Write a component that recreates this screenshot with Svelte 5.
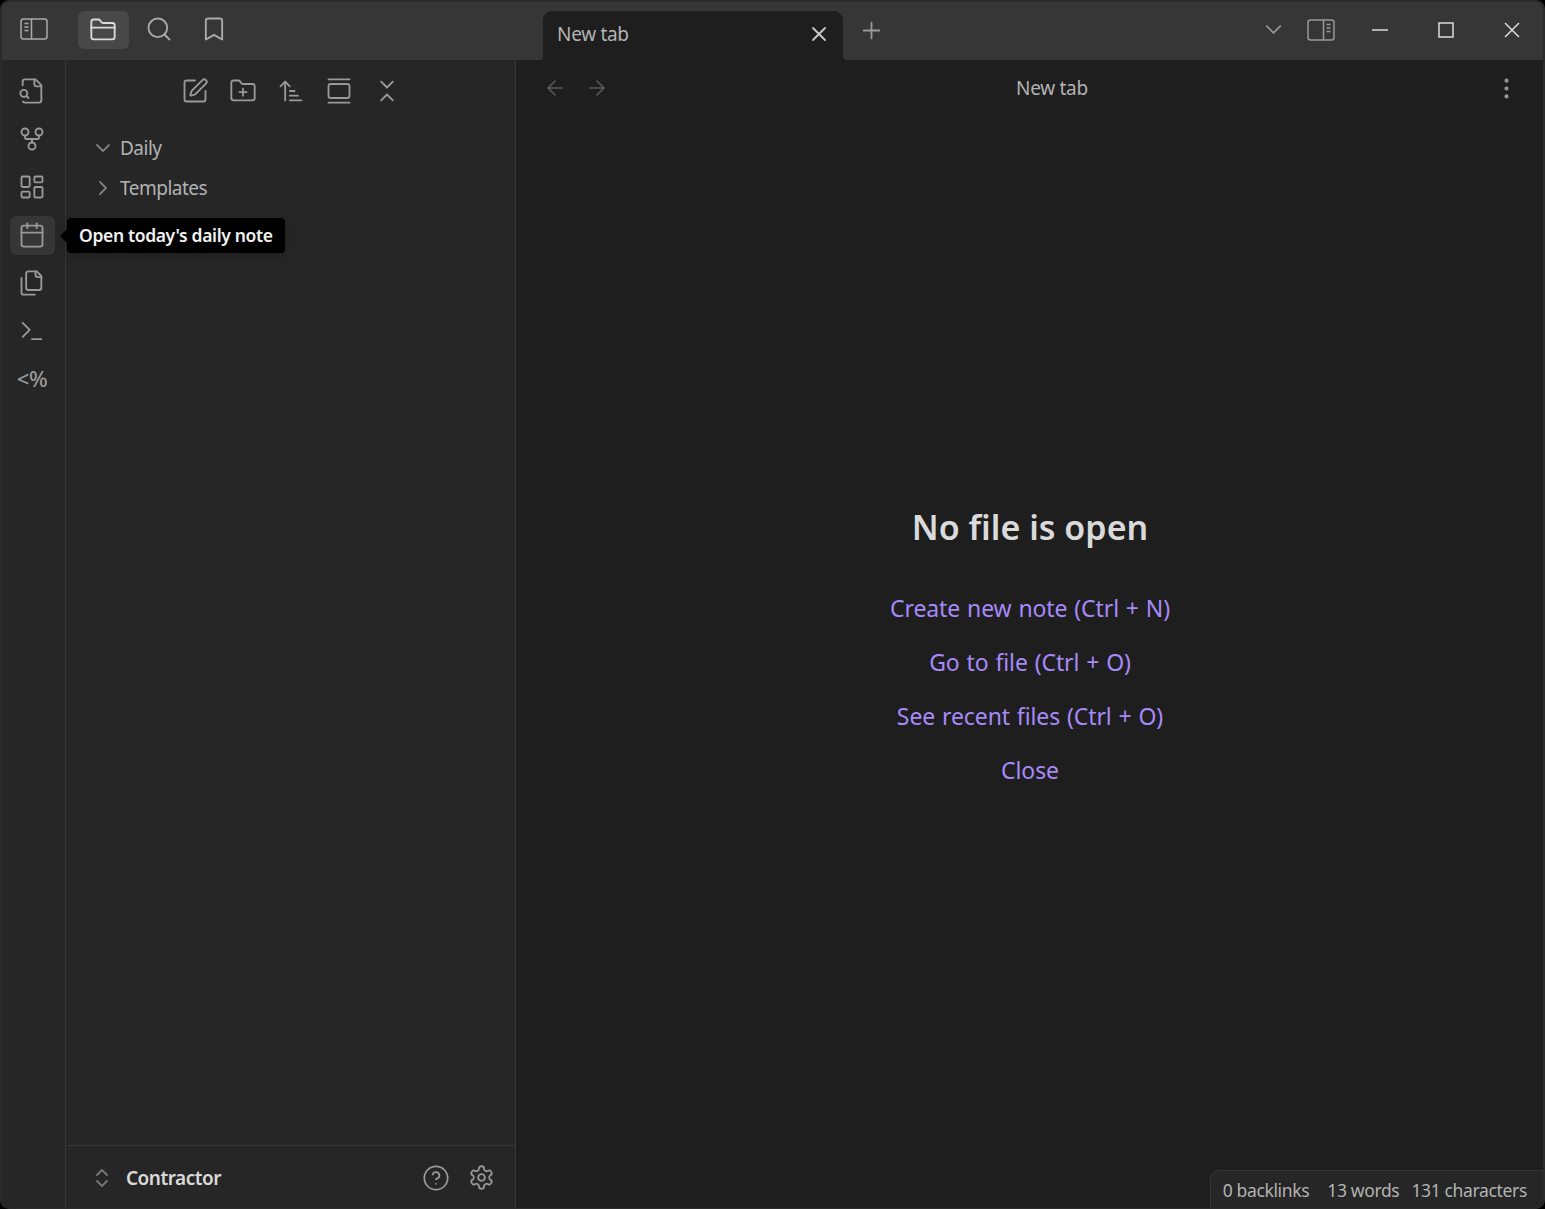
<script lang="ts">
  // Lucide-style icon bodies, all on a 24 unit grid
  const paths: Record<string, string> = {
    folder: '<path d="M20 20a2 2 0 0 0 2-2V8a2 2 0 0 0-2-2h-7.9a2 2 0 0 1-1.69-.9L9.6 3.9A2 2 0 0 0 7.93 3H4a2 2 0 0 0-2 2v13a2 2 0 0 0 2 2Z"/><path d="M2 10h20"/>',
    search: '<circle cx="11" cy="11" r="8"/><path d="m21 21-4.3-4.3"/>',
    bookmark: '<path d="m19 21-7-4-7 4V5a2 2 0 0 1 2-2h10a2 2 0 0 1 2 2v16z"/>',
    fileSearch: '<path d="M14 2v4a2 2 0 0 0 2 2h4"/><path d="M4.268 21a2 2 0 0 0 1.727 1H18a2 2 0 0 0 2-2V7l-5-5H6a2 2 0 0 0-2 2v3"/><path d="m9 18-1.5-1.5"/><circle cx="5" cy="14" r="3"/>',
    fork: '<circle cx="12" cy="18" r="3"/><circle cx="6" cy="6" r="3"/><circle cx="18" cy="6" r="3"/><path d="M18 9v2c0 .6-.4 1-1 1H7c-.6 0-1-.4-1-1V9"/><path d="M12 12v3"/>',
    dashboard: '<rect width="7" height="9" x="3" y="3" rx="1"/><rect width="7" height="5" x="14" y="3" rx="1"/><rect width="7" height="9" x="14" y="12" rx="1"/><rect width="7" height="5" x="3" y="16" rx="1"/>',
    calendar: '<path d="M8 2v4"/><path d="M16 2v4"/><rect width="18" height="18" x="3" y="4" rx="2"/><path d="M3 10h18"/>',
    files: '<path d="M20 7h-3a2 2 0 0 1-2-2V2"/><path d="M9 18a2 2 0 0 1-2-2V4a2 2 0 0 1 2-2h7l4 4v10a2 2 0 0 1-2 2Z"/><path d="M3 7.6v12.8A1.6 1.6 0 0 0 4.6 22h9.8"/>',
    terminal: '<path d="m4 17 6-6-6-6"/><path d="M12 19h8"/>',
    edit: '<path d="M12 3H5a2 2 0 0 0-2 2v14a2 2 0 0 0 2 2h14a2 2 0 0 0 2-2v-7"/><path d="M18.375 2.625a1 1 0 0 1 3 3l-9.013 9.014a2 2 0 0 1-.853.505l-2.873.84a.5.5 0 0 1-.62-.62l.84-2.873a2 2 0 0 1 .506-.852z"/>',
    folderPlus: '<path d="M12 10v6"/><path d="M9 13h6"/><path d="M20 20a2 2 0 0 0 2-2V8a2 2 0 0 0-2-2h-7.9a2 2 0 0 1-1.69-.9L9.6 3.9A2 2 0 0 0 7.93 3H4a2 2 0 0 0-2 2v13a2 2 0 0 0 2 2Z"/>',
    sort: '<path d="m3 8 4-4 4 4"/><path d="M7 4v16"/><path d="M11 12h4"/><path d="M11 16h7"/><path d="M11 20h10"/>',
    gallery: '<path d="M3 2h18"/><rect width="18" height="12" x="3" y="6" rx="2"/><path d="M3 22h18"/>',
    collapse: '<path d="m7 20 5-5 5 5"/><path d="m7 4 5 5 5-5"/>',
    chevronDown: '<path d="m6 9 6 6 6-6"/>',
    chevronRight: '<path d="m9 18 6-6-6-6"/>',
    vault: '<path d="m7 15 5 5 5-5"/><path d="m7 9 5-5 5 5"/>',
    help: '<circle cx="12" cy="12" r="10"/><path d="M9.09 9a3 3 0 0 1 5.83 1c0 2-3 3-3 3"/><path d="M12 17h.01"/>',
    gear: '<path d="M12.22 2h-.44a2 2 0 0 0-2 2v.18a2 2 0 0 1-1 1.73l-.43.25a2 2 0 0 1-2 0l-.15-.08a2 2 0 0 0-2.73.73l-.22.38a2 2 0 0 0 .73 2.73l.15.1a2 2 0 0 1 1 1.72v.51a2 2 0 0 1-1 1.74l-.15.09a2 2 0 0 0-.73 2.73l.22.38a2 2 0 0 0 2.73.73l.15-.08a2 2 0 0 1 2 0l.43.25a2 2 0 0 1 1 1.73V20a2 2 0 0 0 2 2h.44a2 2 0 0 0 2-2v-.18a2 2 0 0 1 1-1.73l.43-.25a2 2 0 0 1 2 0l.15.08a2 2 0 0 0 2.73-.73l.22-.39a2 2 0 0 0-.73-2.73l-.15-.08a2 2 0 0 1-1-1.74v-.5a2 2 0 0 1 1-1.74l.15-.09a2 2 0 0 0 .73-2.73l-.22-.38a2 2 0 0 0-2.73-.73l-.15.08a2 2 0 0 1-2 0l-.43-.25a2 2 0 0 1-1-1.73V4a2 2 0 0 0-2-2z"/><circle cx="12" cy="12" r="3"/>',
    back: '<path d="m12 19-7-7 7-7"/><path d="M19 12H5"/>',
    forward: '<path d="M5 12h14"/><path d="m12 5 7 7-7 7"/>',
    close: '<path d="M18 6 6 18"/><path d="m6 6 12 12"/>',
    plus: '<path d="M5 12h14"/><path d="M12 5v14"/>',
    more: '<circle cx="12" cy="12" r="1"/><circle cx="12" cy="5" r="1"/><circle cx="12" cy="19" r="1"/>'
  };

  const ribbon = ["fileSearch", "fork", "dashboard", "calendar", "files", "terminal"];
  const navActions = ["edit", "folderPlus", "sort", "gallery", "collapse"];
  const links = [
    "Create new note (Ctrl + N)",
    "Go to file (Ctrl + O)",
    "See recent files (Ctrl + O)",
    "Close"
  ];
</script>

{#snippet icon(name: string, size = 27, width = 1.75)}
  <svg
    xmlns="http://www.w3.org/2000/svg"
    viewBox="0 0 24 24"
    width={size}
    height={size}
    fill="none"
    stroke="currentColor"
    stroke-width={width}
    stroke-linecap="round"
    stroke-linejoin="round"
  >
    {@html paths[name]}
  </svg>
{/snippet}

<div class="window">
  <header class="titlebar">
    <div class="title-left">
      <button class="tb-btn sidebar-toggle" aria-label="Toggle sidebar">
        <svg width="28" height="22" viewBox="0 0 28 22" fill="none" stroke="currentColor" stroke-width="1.5">
          <rect x="1" y="1" width="26" height="20" rx="2.5" />
          <path d="M11.5 1v20M4.5 5.5h4M4.5 9h4M4.5 12.5h4" />
        </svg>
      </button>
      <button class="tb-btn active" aria-label="Files">{@render icon("folder", 28, 1.6)}</button>
      <button class="tb-btn" aria-label="Search">{@render icon("search", 28, 1.6)}</button>
      <button class="tb-btn" aria-label="Bookmarks">{@render icon("bookmark", 28, 1.6)}</button>
    </div>
    <div class="tab">
      <span>New tab</span>
      <span class="tab-close">{@render icon("close", 24, 1.8)}</span>
    </div>
    <span class="new-tab">{@render icon("plus", 27, 1.6)}</span>
    <div class="title-right">
      <span class="tab-list">{@render icon("chevronDown", 27, 1.5)}</span>
      <span class="sidebar-right">
        <svg width="28" height="22" viewBox="0 0 28 22" fill="none" stroke="currentColor" stroke-width="1.5">
          <rect x="1" y="1" width="26" height="20" rx="2.5" />
          <path d="M16.5 1v20M19.5 5.5h4M19.5 9h4M19.5 12.5h4" />
        </svg>
      </span>
      <span class="win-btn">
        <svg width="16" height="16" viewBox="0 0 16 16" stroke="currentColor" stroke-width="1.5"><path d="M0 8h16" /></svg>
      </span>
      <span class="win-btn">
        <svg width="16" height="16" viewBox="0 0 16 16" fill="none" stroke="currentColor" stroke-width="1.5"><rect x="1" y="1" width="14" height="14" /></svg>
      </span>
      <span class="win-btn">
        <svg width="16" height="16" viewBox="0 0 16 16" stroke="currentColor" stroke-width="1.5"><path d="M1 1l14 14M15 1L1 15" /></svg>
      </span>
    </div>
  </header>

  <div class="body">
    <aside class="ribbon">
      {#each ribbon as name}
        <button class="ribbon-btn" class:active={name === "calendar"} aria-label={name}>
          {@render icon(name, 28, 1.6)}
        </button>
      {/each}
      <button class="ribbon-btn percent">&lt;%</button>
    </aside>

    <aside class="sidebar">
      <div class="nav-actions">
        {#each navActions as name}
          <span class="nav-action">{@render icon(name, 28, 1.6)}</span>
        {/each}
      </div>
      <div class="tree">
        <div class="tree-item">
          <span class="chevron">{@render icon("chevronDown", 24, 1.8)}</span>Daily
        </div>
        <div class="tree-item">
          <span class="chevron">{@render icon("chevronRight", 24, 1.8)}</span>Templates
        </div>
      </div>
      <footer class="vault">
        <span class="vault-switch">{@render icon("vault", 24, 1.8)}</span>
        <span class="vault-name">Contractor</span>
        <span class="vault-icon">{@render icon("help", 28, 1.5)}</span>
        <span class="vault-icon">{@render icon("gear", 27, 1.6)}</span>
      </footer>
    </aside>

    <main class="main">
      <div class="view-header">
        <div class="view-nav">
          <span>{@render icon("back", 24, 1.6)}</span>
          <span>{@render icon("forward", 24, 1.6)}</span>
        </div>
        <div class="view-title">New tab</div>
        <span class="view-more">{@render icon("more", 27, 1.6)}</span>
      </div>
      <div class="empty">
        <h1>No file is open</h1>
        {#each links as link}
          <a href="#top">{link}</a>
        {/each}
      </div>
    </main>
  </div>

  <div class="tooltip">Open today's daily note</div>
  <div class="status">
    <span class="first">0 backlinks</span><span>13 words</span><span>131 characters</span>
  </div>
</div>

<style>
  :global(body) {
    margin: 0;
    background: #000;
  }
  .window {
    position: relative;
    box-sizing: border-box;
    width: 1545px;
    height: 1209px;
    display: flex;
    flex-direction: column;
    overflow: hidden;
    border-radius: 9px;
    border: 2px solid #2b2b2b;
    border-bottom-width: 1px;
    background: #1e1e1e;
    font-family: "Noto Sans", "Open Sans", sans-serif;
    color: #b3b3b3;
  }
  button {
    border: 0;
    background: none;
    padding: 0;
    color: inherit;
    font: inherit;
    display: flex;
    align-items: center;
    justify-content: center;
  }
  span {
    display: inline-flex;
    align-items: center;
  }

  .titlebar {
    flex: none;
    height: 58px;
    display: flex;
    background: #363636;
    position: relative;
  }
  .title-left {
    width: 541px;
    display: flex;
    align-items: center;
    padding: 0 0 4px 76px;
    box-sizing: border-box;
    gap: 4px;
    color: #ababab;
  }
  .tb-btn {
    width: 51px;
    height: 38px;
    border-radius: 6px;
  }
  .sidebar-toggle {
    position: absolute;
    left: 6px;
    top: 8px;
  }
  .tb-btn.active {
    background: #484848;
    color: #dadada;
    margin-top: 2px;
    padding-right: 2px;
  }
  .tab {
    position: relative;
    width: 300px;
    height: 49px;
    margin-top: 9px;
    box-sizing: border-box;
    padding: 0 12px 3px 14px;
    display: flex;
    align-items: center;
    justify-content: space-between;
    background: #1e1e1e;
    border-radius: 9px 9px 0 0;
    font-size: 19px;
    letter-spacing: -0.3px;
    color: #b3b3b3;
  }
  /* small flared corners where the tab meets the view below */
  .tab::before,
  .tab::after {
    content: "";
    position: absolute;
    bottom: 0;
    width: 5px;
    height: 5px;
  }
  .tab::before {
    left: -5px;
    background: radial-gradient(circle at 0 0, transparent 5px, #262626 5.5px);
  }
  .tab::after {
    right: -5px;
    background: radial-gradient(circle at 100% 0, transparent 5px, #1e1e1e 5.5px);
  }
  .tab-close {
    color: #c8c8c8;
  }
  .new-tab {
    margin-left: 15px;
    color: #999;
    margin-top: -1px;
  }
  .title-right {
    margin-left: auto;
    margin-right: -2px;
    display: flex;
    align-items: center;
    padding-bottom: 3px;
    color: #999;
  }
  .tab-list {
    margin-right: 20px;
  }
  .sidebar-right {
    margin-right: 12px;
    margin-top: 1px;
  }
  .win-btn {
    width: 66px;
    height: 40px;
    justify-content: center;
    color: #dcdcdc;
  }

  .body {
    flex: 1;
    display: flex;
    min-height: 0;
  }
  .ribbon {
    flex: none;
    width: 64px;
    box-sizing: border-box;
    border-right: 1px solid #363636;
    background: #262626;
    padding-top: 9px;
    display: flex;
    flex-direction: column;
    align-items: center;
    gap: 3px;
    color: #999;
  }
  .ribbon-btn {
    width: 45px;
    height: 45px;
    padding: 0 1px 2px 0;
    border-radius: 6px;
    margin-right: 2px;
  }
  .ribbon-btn.active {
    background: #363636;
    height: 39px;
    margin: 3px 2px 3px 0;
  }
  .percent {
    font-size: 22px;
    font-weight: 500;
    letter-spacing: -0.5px;
    padding-bottom: 4px;
  }

  .sidebar {
    flex: none;
    width: 450px;
    box-sizing: border-box;
    border-right: 1px solid #363636;
    background: #262626;
    display: flex;
    flex-direction: column;
  }
  .nav-actions {
    height: 62px;
    display: flex;
    align-items: center;
    justify-content: center;
    gap: 20px;
    padding-left: 1px;
    color: #999;
  }
  .tree {
    flex: 1;
    padding: 6px 0 0 25px;
  }
  .tree-item {
    height: 40px;
    display: flex;
    align-items: center;
    gap: 5px;
    font-size: 19px;
    letter-spacing: -0.5px;
    color: #b3b3b3;
  }
  .chevron {
    color: #7f7f7f;
  }
  .vault {
    flex: none;
    height: 63px;
    box-sizing: border-box;
    border-top: 1px solid #363636;
    display: flex;
    align-items: center;
    padding: 1px 20px 0 24px;
    color: #999;
  }
  .vault-switch {
    color: #777;
  }
  .vault-name {
    flex: 1;
    margin-left: 12px;
    font-size: 19px;
    letter-spacing: -0.5px;
    font-weight: 600;
    color: #dadada;
  }
  .vault-icon {
    margin-left: 18px;
  }

  .main {
    flex: 1;
    min-width: 0;
    display: flex;
    flex-direction: column;
    background: #1e1e1e;
  }
  .view-header {
    flex: none;
    height: 56px;
    display: flex;
    align-items: center;
    position: relative;
    padding: 0 23px 0 27px;
  }
  .view-nav {
    display: flex;
    gap: 18px;
    color: #5a5a5a;
  }
  .view-title {
    position: absolute;
    left: 0;
    right: -45px;
    text-align: center;
    font-size: 19px;
    letter-spacing: -0.3px;
    color: #b3b3b3;
  }
  .view-more {
    margin-left: auto;
    color: #999;
  }
  .empty {
    flex: 1;
    display: flex;
    flex-direction: column;
    align-items: center;
    justify-content: center;
    padding-bottom: 27px;
    padding-left: 1px;
  }
  h1 {
    margin: 1px 0 28px;
    font-size: 34px;
    line-height: 52px;
    font-weight: 600;
    color: #dadada;
  }
  a {
    font-size: 23px;
    line-height: 34px;
    margin-top: 10px;
    margin-bottom: 10px;
    word-spacing: 1px;
    letter-spacing: -0.1px;
    color: #a68af9;
    text-decoration: none;
  }

  .tooltip {
    position: absolute;
    left: 65px;
    top: 216px;
    width: 218px;
    height: 35px;
    box-sizing: border-box;
    padding: 0 0 2px 12px;
    display: flex;
    align-items: center;
    white-space: nowrap;
    background: #000;
    border-radius: 4px;
    font-size: 17.5px;
    letter-spacing: -0.35px;
    font-weight: 600;
    color: #f2f2f2;
    box-shadow: 0 2px 8px rgba(0, 0, 0, 0.25);
  }
  .tooltip::before {
    content: "";
    position: absolute;
    left: -7px;
    top: 11px;
    border: 7px solid transparent;
    border-left-width: 0;
    border-right-color: #000;
  }
  .status {
    position: absolute;
    right: 0;
    bottom: 0;
    height: 38px;
    box-sizing: border-box;
    padding: 0 16px 0 12px;
    display: flex;
    align-items: center;
    gap: 12px;
    background: #262626;
    border: 1px solid #363636;
    border-width: 1px 0 0 1px;
    border-radius: 9px 0 0 0;
    font-size: 17.5px;
    letter-spacing: -0.35px;
    color: #b3b3b3;
  }
  .status .first {
    margin-right: 6px;
  }
</style>
